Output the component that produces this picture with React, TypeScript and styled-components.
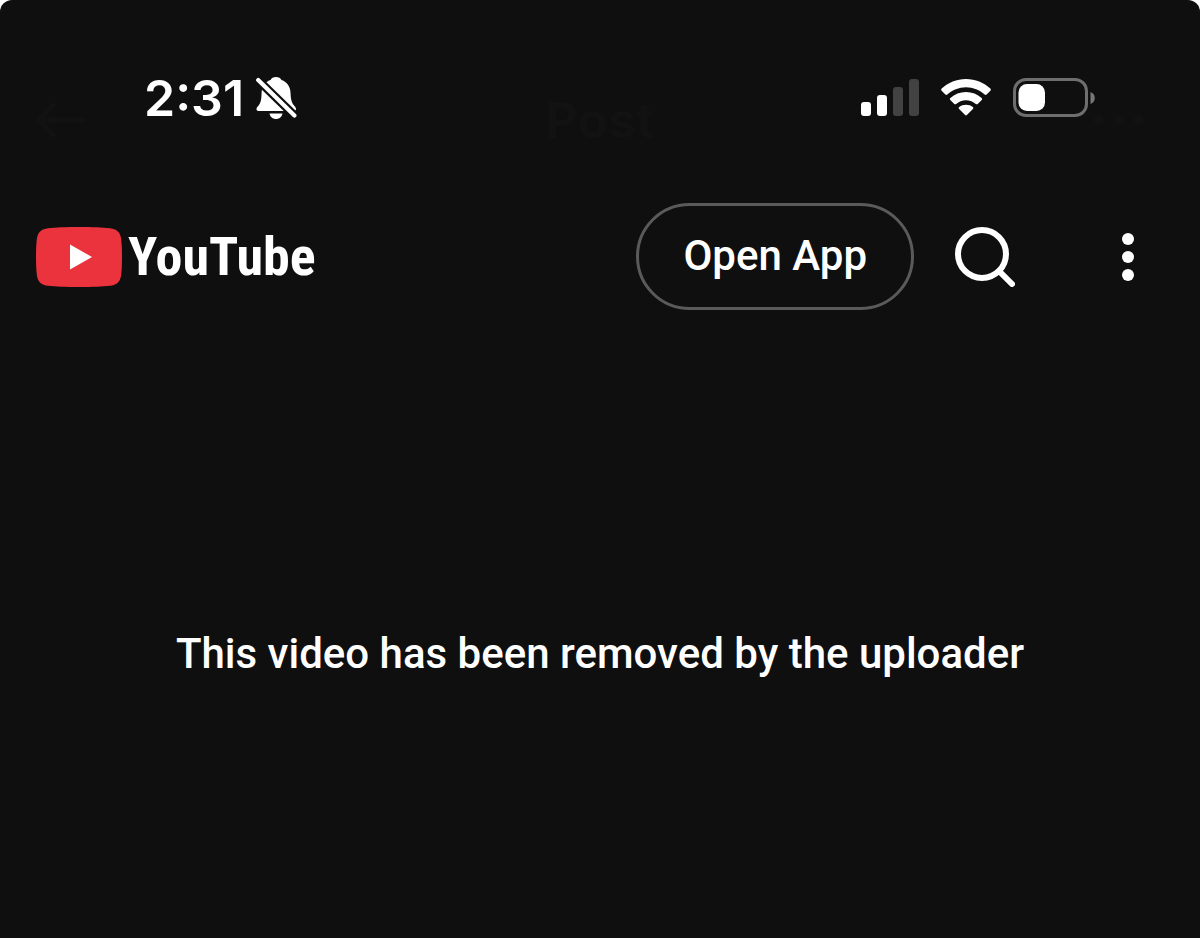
import React from "react";
import styled, { createGlobalStyle } from "styled-components";

const GlobalStyle = createGlobalStyle`
  *, *::before, *::after { box-sizing: border-box; }
  body { margin: 0; background: #ffffff; }
  button { font: inherit; color: inherit; cursor: pointer; }
`;

const Screen = styled.div`
  position: relative;
  display: flex;
  flex-direction: column;
  min-height: 100vh;
  overflow: hidden;
  border-radius: 12px 12px 0 0;
  background: #0f0f0f;
  color: #ffffff;
  font-family: Roboto, "Liberation Sans", sans-serif;
`;

/* Previous screen's title bar, almost faded out behind the page */
const FadedBar = styled.div`
  position: absolute;
  top: 92px;
  left: 0;
  right: 0;
  display: grid;
  grid-template-columns: 1fr auto 1fr;
  align-items: center;
  height: 56px;
  padding: 0 36px;
  color: #121212;
  font: 700 50px/56px Inter, sans-serif;

  svg:last-child {
    justify-self: end;
    margin-right: 20px;
  }
`;

const StatusBar = styled.div`
  position: relative;
  display: flex;
  align-items: center;
  justify-content: space-between;
  height: 196px;
  padding: 0 105px 0 144px;
`;

const StatusGroup = styled.div<{ $gap: number }>`
  display: flex;
  align-items: center;
  gap: ${({ $gap }) => $gap}px;
`;

const Clock = styled.time`
  font: 600 50px/60px Inter, sans-serif;
`;

const Header = styled.header`
  position: relative;
  display: flex;
  align-items: center;
  justify-content: space-between;
  height: 121px;
  padding: 0 36px;
`;

const Logo = styled.a`
  display: flex;
  align-items: center;
  gap: 6px;
  color: inherit;
  text-decoration: none;
`;

const Wordmark = styled.span`
  font: 700 54px/60px "Roboto Condensed", "Liberation Sans Narrow", sans-serif;
`;

const Actions = styled.div`
  display: flex;
  align-items: center;
`;

const OpenButton = styled.button`
  height: 107px;
  margin-right: 35px;
  padding: 0 44px 2px;
  border: 3px solid #5a5a5a;
  border-radius: 54px;
  background: transparent;
  font-size: 42px;
  font-weight: 500;
  line-height: 48px;
`;

const IconButton = styled.button`
  display: flex;
  align-items: center;
  justify-content: center;
  width: 72px;
  height: 72px;
  padding: 0;
  border: 0;
  background: transparent;

  & + & { margin-left: 71px; }
`;

const Message = styled.main`
  display: flex;
  justify-content: center;
  padding: 312px 24px 24px;
`;

const MessageText = styled.p`
  margin: 0;
  font-size: 42px;
  font-weight: 500;
  line-height: 50px;
  text-align: center;
`;

const BellOff = () => (
  <svg width="42" height="44" viewBox="0 0 42 44" aria-label="Silent mode">
    <path
      fill="#fff"
      d="M20 1c2.600 0 4.600 1 5.500 3 5.600 2 8.700 6.500 9 12.500.3 7 1 10 4 13.500 1.200 1.400 1.500 2.300 1.500 3.300 0 1.200-.9 1.700-2.500 1.700H3c-1.600 0-2.500-.6-2.500-1.800 0-1.200.6-2 1.700-3.200C5 26.700 5.400 23.500 5.600 16.500 6 10.500 9 6 14.500 4 15.400 2 17.400 1 20 1z"
    />
    <path fill="#fff" d="M13.500 37.500h13c-.6 3.400-3.200 5.500-6.500 5.500s-5.900-2.100-6.500-5.500z" />
    <path stroke="#0f0f0f" strokeWidth="8.500" d="M-1 1l43 42" />
    <path stroke="#fff" strokeWidth="4.200" strokeLinecap="round" d="M2.200 4.100L38.400 39.500" />
  </svg>
);

const Signal = () => (
  <svg width="58" height="38" viewBox="0 0 58 38" aria-label="Signal strength">
    <rect x="0" y="23" width="10" height="14" rx="3" fill="#fff" />
    <rect x="16" y="16" width="10" height="21" rx="3" fill="#fff" />
    <rect x="32" y="8" width="10" height="29" rx="3" fill="#424242" />
    <rect x="48" y="0" width="10" height="37" rx="3" fill="#424242" />
  </svg>
);

const Wifi = () => (
  <svg width="50" height="38" viewBox="0 0 50 38" fill="#fff" aria-label="Wi-Fi">
    <path d="M25 0c9.400 0 17.900 3.600 24.300 9.600.7.700.7 1.500.1 2.200l-3.800 3.800c-.6.600-1.300.6-1.900 0C38.800 11 32.200 8.200 25 8.200S11.200 11 6.300 15.600c-.6.6-1.300.6-1.900 0L.6 11.800c-.6-.7-.6-1.500.1-2.200C7.100 3.600 15.600 0 25 0z" />
    <path d="M25 13c6 0 11.400 2.200 15.600 5.900.7.600.7 1.400.1 2l-4 4c-.6.600-1.200.6-1.900 0-2.600-2.300-6-3.700-9.800-3.700s-7.200 1.400-9.800 3.700c-.7.600-1.300.6-1.900 0l-4-4c-.6-.6-.6-1.400.1-2C13.600 15.200 19 13 25 13z" />
    <path d="M25 25.800c2.500 0 4.900.8 6.800 2.200.7.500.7 1.300.1 1.900l-6 6.100c-.6.600-1.200.6-1.800 0l-6-6.100c-.6-.6-.6-1.400.1-1.900 1.900-1.400 4.300-2.200 6.800-2.200z" />
  </svg>
);

const Battery = () => (
  <svg width="82" height="40" viewBox="0 0 82 40" aria-label="Battery">
    <rect x="1.500" y="1.500" width="72" height="36" rx="11.500" fill="none" stroke="#6e6e6e" strokeWidth="3" />
    <rect x="5.500" y="6" width="26.500" height="27" rx="8.500" fill="#fff" />
    <path d="M77.500 14c2.700 1 4.300 3.200 4.300 6s-1.600 5-4.300 6z" fill="#777" />
  </svg>
);

const PlayBadge = () => (
  <svg width="86" height="60" viewBox="0 0 86 60" aria-hidden="true">
    <path
      fill="#eb333e"
      d="M43 0c14 0 23 .4 31 1.200C80.500 1.900 84 5 85 11c.7 5 1 11 1 19s-.3 14-1 19c-1 6-4.500 9.100-11 9.800-8 .8-17 1.200-31 1.200s-23-.4-31-1.200C5.500 58.100 2 55 1 49c-.7-5-1-11-1-19s.3-14 1-19C2 5 5.500 1.900 12 1.200 20 .4 29 0 43 0z"
    />
    <path fill="#fff" d="M34 17.500v25L56 30z" />
  </svg>
);

const SearchIcon = () => (
  <svg width="60" height="60" viewBox="0 0 60 60" fill="none" stroke="#fff" aria-hidden="true">
    <circle cx="27" cy="27" r="24" strokeWidth="6" />
    <path d="M44 44l13 13" strokeWidth="6" strokeLinecap="round" />
  </svg>
);

const MoreIcon = () => (
  <svg width="12" height="48" viewBox="0 0 12 48" fill="#fff" aria-hidden="true">
    <circle cx="6" cy="6" r="6" />
    <circle cx="6" cy="24" r="6" />
    <circle cx="6" cy="42" r="6" />
  </svg>
);

export default function App() {
  return (
    <>
      <GlobalStyle />
      <Screen>
        <FadedBar aria-hidden="true">
          <svg width="50" height="40" viewBox="0 0 50 40" fill="none" stroke="#121212" strokeWidth="5">
            <path d="M19 3L3 20l16 17M3 20h45" />
          </svg>
          <span>Post</span>
          <svg width="50" height="12" viewBox="0 0 50 12" fill="#121212">
            <circle cx="5" cy="6" r="5" />
            <circle cx="25" cy="6" r="5" />
            <circle cx="45" cy="6" r="5" />
          </svg>
        </FadedBar>
        <StatusBar>
          <StatusGroup $gap={12}>
            <Clock>2:31</Clock>
            <BellOff />
          </StatusGroup>
          <StatusGroup $gap={22}>
            <Signal />
            <Wifi />
            <Battery />
          </StatusGroup>
        </StatusBar>
        <Header>
          <Logo href="#" aria-label="YouTube">
            <PlayBadge />
            <Wordmark>YouTube</Wordmark>
          </Logo>
          <Actions>
            <OpenButton type="button">Open App</OpenButton>
            <IconButton type="button" aria-label="Search">
              <SearchIcon />
            </IconButton>
            <IconButton type="button" aria-label="More options">
              <MoreIcon />
            </IconButton>
          </Actions>
        </Header>
        <Message>
          <MessageText>This video has been removed by the uploader</MessageText>
        </Message>
      </Screen>
    </>
  );
}
